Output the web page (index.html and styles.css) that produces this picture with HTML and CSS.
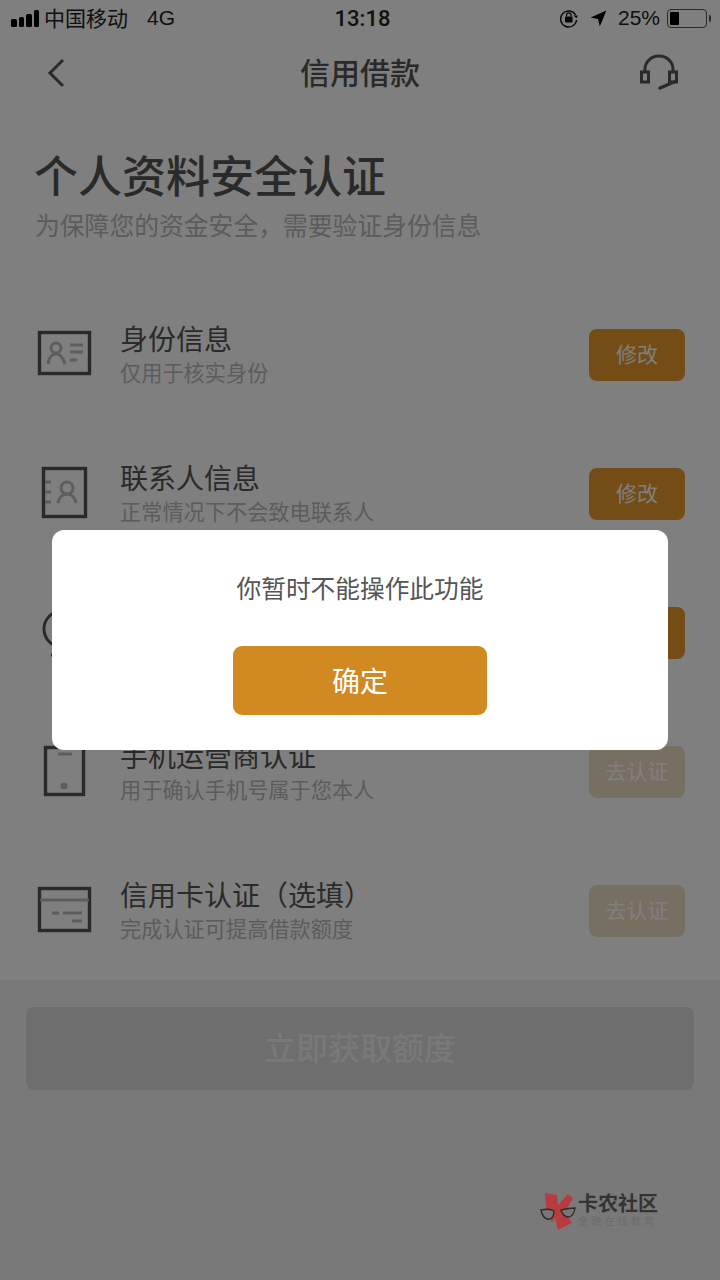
FILE: index.html
```html
<!DOCTYPE html>
<html lang="zh-CN">
<head>
<meta charset="utf-8">
<title>信用借款</title>
<link rel="stylesheet" href="styles.css">
</head>
<body>
<div class="page">
  <div class="status">
    <div class="status-left">
      <span class="signal"><i class="b1"></i><i class="b2"></i><i class="b3"></i><i class="b4"></i></span>
      <span class="carrier">中国移动</span>
      <span class="net">4G</span>
    </div>
    <div class="status-time">13:18</div>
    <div class="status-right">
      <svg class="ico-lock" width="20" height="20" viewBox="0 0 20 20"><path d="M16.600 7A8 8 0 1 0 17.600 12" fill="none" stroke="#111" stroke-width="1.400"/><path d="M14.400 7.600h4.600l-1.600 2.600z" fill="#111"/><rect x="6" y="8.600" width="7.600" height="5.800" rx=".8" fill="#111"/><path d="M7.600 8.600V7a2.200 2.200 0 0 1 4.400 0v1.600" fill="none" stroke="#111" stroke-width="1.300"/></svg>
      <svg class="ico-loc" width="17" height="17" viewBox="0 0 17 17"><path d="M16.400.6 9.800 16.400 8 9 .6 7.400z" fill="#000"/></svg>
      <span class="batt-text">25%</span>
      <span class="batt"><span class="batt-fill"></span></span><span class="batt-tip"></span>
    </div>
  </div>

  <div class="nav">
    <svg class="nav-back" width="20" height="30" viewBox="0 0 20 30"><path d="M17 2 4 15l13 13" fill="none" stroke="#555" stroke-width="3"/></svg>
    <div class="nav-title">信用借款</div>
    <svg class="nav-help" width="40" height="38" viewBox="0 0 40 38"><path d="M6 18v-3a14 13 0 0 1 28 0v3" fill="none" stroke="#555" stroke-width="3"/><rect x="2.500" y="18" width="7" height="10" fill="none" stroke="#555" stroke-width="3"/><rect x="30.500" y="18" width="7" height="10" fill="none" stroke="#555" stroke-width="3"/><path d="M35 28 21 34" fill="none" stroke="#555" stroke-width="3.400" stroke-linecap="round"/></svg>
  </div>

  <div class="intro">
    <h1 class="intro-title">个人资料安全认证</h1>
    <p class="intro-sub">为保障您的资金安全，需要验证身份信息</p>
  </div>

  <div class="list">
    <div class="row">
      <div class="row-icon">
        <svg width="56" height="56" viewBox="0 0 56 56"><rect x="3.500" y="5.500" width="50" height="41" fill="none" stroke="#555" stroke-width="3.400"/><circle cx="20" cy="21" r="5" fill="none" stroke="#bbb" stroke-width="3"/><path d="M12 37c1-7 4-10 8-10s7 3 9 10" fill="none" stroke="#bbb" stroke-width="3"/><path d="M34 18h13M34 25h13M34 33h7" stroke="#bbb" stroke-width="3"/></svg>
      </div>
      <div class="row-text"><div class="row-title">身份信息</div><div class="row-sub">仅用于核实身份</div></div>
      <div class="btn btn-on">修改</div>
    </div>
    <div class="row">
      <div class="row-icon">
        <svg width="56" height="56" viewBox="0 0 56 56"><rect x="7.500" y="2.500" width="42" height="48" fill="none" stroke="#555" stroke-width="3.400"/><path d="M9 16h6M9 26h6M9 36h6" stroke="#bbb" stroke-width="3"/><circle cx="31" cy="22" r="6" fill="none" stroke="#bbb" stroke-width="3"/><path d="M22 37c1-6 5-9 9-9s8 3 9 9" fill="none" stroke="#bbb" stroke-width="3"/></svg>
      </div>
      <div class="row-text"><div class="row-title">联系人信息</div><div class="row-sub">正常情况下不会致电联系人</div></div>
      <div class="btn btn-on">修改</div>
    </div>
    <div class="row">
      <div class="row-icon">
        <svg width="56" height="56" viewBox="0 0 56 56"><circle cx="26" cy="24" r="18" fill="none" stroke="#555" stroke-width="3"/><path d="M15 50h26" stroke="#555" stroke-width="3"/></svg>
      </div>
      <div class="row-text"><div class="row-title">工作信息</div><div class="row-sub">用于评估借款额度</div></div>
      <div class="btn btn-on">修改</div>
    </div>
    <div class="row">
      <div class="row-icon">
        <svg width="56" height="56" viewBox="0 0 56 56"><rect x="9.500" y="3.500" width="38" height="47" fill="none" stroke="#555" stroke-width="3.400"/><path d="M22 10h14" stroke="#bbb" stroke-width="3"/><circle cx="28" cy="42" r="3.500" fill="#bbb"/></svg>
      </div>
      <div class="row-text"><div class="row-title">手机运营商认证</div><div class="row-sub">用于确认手机号属于您本人</div></div>
      <div class="btn btn-off">去认证</div>
    </div>
    <div class="row row-last">
      <div class="row-icon">
        <svg width="56" height="56" viewBox="0 0 56 56"><rect x="3.500" y="5.500" width="50" height="42" fill="none" stroke="#555" stroke-width="3.400"/><path d="M4 17h49" stroke="#bbb" stroke-width="3"/><path d="M16 30h7M27 30h19M36 38h10" stroke="#bbb" stroke-width="3"/></svg>
      </div>
      <div class="row-text"><div class="row-title">信用卡认证（选填）</div><div class="row-sub">完成认证可提高借款额度</div></div>
      <div class="btn btn-off">去认证</div>
    </div>
  </div>

  <div class="footer">
    <div class="cta">立即获取额度</div>
  </div>

  <div class="mask"></div>

  <div class="dialog">
    <p class="dialog-msg">你暂时不能操作此功能</p>
    <div class="dialog-btn">确定</div>
  </div>

  <div class="brand">
    <svg class="brand-logo" width="36" height="42" viewBox="0 0 36 42"><path d="M5 3l12 2 1 10L28 4l5 4-8 14 7 11-14 7-3-12-3 4-5-6z" fill="#b83b40"/><path d="M1 20c5-1 10-1 13 1 0 6-3 9-7 8-3-1-5-4-6-9zM21 20c4-1 9-2 14-2-1 6-3 9-7 9-3 0-6-3-7-7z" fill="#777" stroke="#2c2c2c" stroke-width="1.400"/></svg>
    <div class="brand-text">
      <div class="brand-name">卡农社区</div>
      <div class="brand-sub">金融在线教育</div>
    </div>
  </div>
</div>
</body>
</html>
```
FILE: styles.css
```css
* { box-sizing: border-box; }
html, body { margin: 0; padding: 0; }
body { width: 720px; height: 1280px; overflow: hidden; background: #fff; font-family: "Noto Sans CJK SC", "Noto Sans", sans-serif; }
.page { position: relative; width: 720px; height: 1280px; background: #fff; overflow: hidden; display: flex; flex-direction: column; }

.status { height: 36px; padding: 0 9px 0 11px; display: flex; align-items: center; position: relative; flex: none; color: #111; font-family: "Liberation Sans", "Noto Sans CJK SC", sans-serif; }
.status-left { display: flex; align-items: center; font-size: 21px; }
.signal { display: flex; align-items: flex-end; gap: 2px; width: 28px; height: 18px; }
.signal i { display: block; width: 5.500px; background: #000; border-radius: 1.500px; }
.b1 { height: 8px; } .b2 { height: 10px; } .b3 { height: 13px; } .b4 { height: 17px; }
.carrier { margin: 0 0 2px 5px; font-family: "Noto Sans CJK SC", sans-serif; font-size: 21px; color: #222; }
.net { margin-left: 19px; font-size: 21px; color: #222; }
.status-time { position: absolute; left: 5px; right: 0; top: 0; height: 36px; line-height: 37px; text-align: center; font-family: Roboto, sans-serif; font-size: 22px; font-weight: 500; color: #222; }
.status-right { margin-left: auto; display: flex; align-items: center; }
.ico-loc { margin-left: 11px; }
.batt-text { margin-left: 11px; font-size: 21px; color: #222; }
.batt { margin-left: 7px; width: 40px; height: 19px; border: 1.500px solid #555; border-radius: 4px; padding: 2px; display: block; }
.batt-fill { display: block; width: 8.500px; height: 100%; background: #000; border-radius: 1px; }
.batt-tip { width: 2px; height: 7px; background: #555; margin-left: 2px; border-radius: 0 2px 2px 0; }

.nav { height: 74px; display: flex; align-items: center; justify-content: space-between; padding: 0 41px 0 46px; position: relative; flex: none; }
.nav-title { position: absolute; left: 0; right: 0; top: 0; text-align: center; font-size: 30px; font-weight: 500; color: #555; line-height: 70px; }

.intro { padding: 0 35px; flex: none; height: 175px; }
.intro-title { margin: 32px 0 0 -1px; font-size: 44px; line-height: 64px; font-weight: 500; color: #555; }
.intro-sub { margin: 0; font-size: 24.800px; line-height: 36px; color: #b8b8b8; }

.list { flex: none; }
.row { height: 139px; display: flex; align-items: center; padding: 0 35px 0 36px; position: relative; }
.row::after { content: ""; position: absolute; left: 120px; right: 0; bottom: 0; height: 1px; background: #fbfbfb; }
.row-last::after { display: none; }
.row-icon { width: 84px; flex: none; display: flex; align-items: center; }
.row-text { flex: 1; min-width: 0; margin-top: -2px; }
.row-title { font-size: 28px; line-height: 36px; color: #555; }
.row-sub { font-size: 21.200px; line-height: 32px; color: #b8b8b8; }
.btn { width: 96px; height: 52px; border-radius: 8px; flex: none; text-align: center; line-height: 49px; font-size: 21px; }
.btn-on { background: #e6982c; color: #fff; }
.btn-off { background: #f0dfc6; color: #fff; }

.footer { flex: 1; background: #f2f2f2; padding: 27px 26px 0; }
.cta { height: 83px; border-radius: 8px; background: #dcdcdc; color: #f2f2f2; text-align: center; line-height: 79px; font-size: 32px; font-weight: 500; }

.mask { position: absolute; inset: 0; background: rgba(0,0,0,.5); }

.dialog { position: absolute; left: 52px; top: 530px; width: 616px; height: 220px; background: #fff; border-radius: 12px; display: flex; flex-direction: column; align-items: center; }
.dialog-msg { margin: 39px 0 0; font-size: 24.700px; line-height: 36px; color: #555; }
.dialog-btn { margin-top: 41px; width: 254px; height: 69px; border-radius: 9px; background: #d18a22; color: #fff; text-align: center; line-height: 69px; font-size: 28px; }

.brand { position: absolute; left: 540px; top: 1190px; display: flex; align-items: flex-start; }
.brand-text { margin-left: 2px; margin-top: 3px; font-family: "Liberation Sans", "Noto Sans CJK SC", sans-serif; }
.brand-name { font-size: 20px; line-height: 23px; font-weight: 700; color: #333; }
.brand-sub { font-size: 10px; line-height: 12px; letter-spacing: 3.200px; color: #6c6c6c; }
```
